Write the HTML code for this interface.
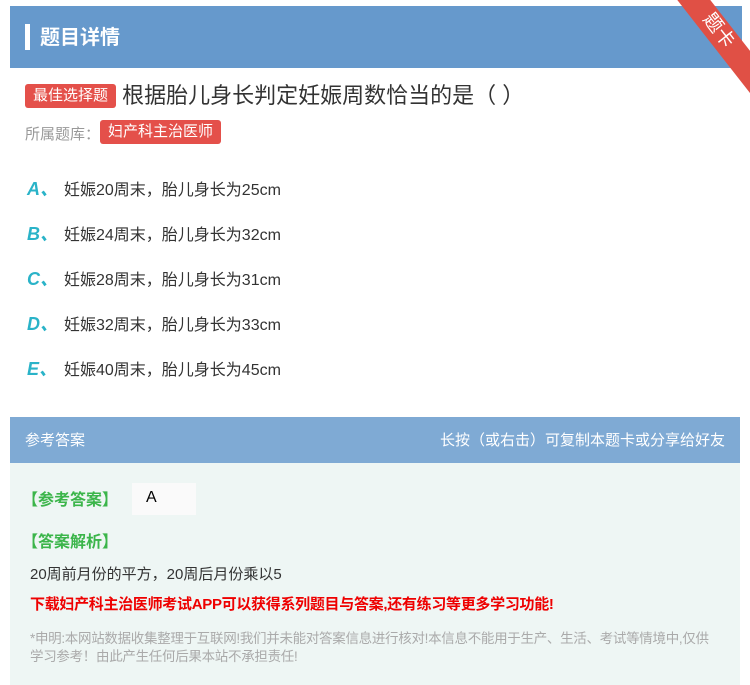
<!DOCTYPE html>
<html><head><meta charset="utf-8"><style>
*{margin:0;padding:0;box-sizing:border-box}
body{width:750px;height:685px;background:#fff;font-family:"Liberation Sans","Noto Sans CJK SC",sans-serif;position:relative;overflow:hidden}
.hd{position:absolute;left:10px;top:6px;width:732px;height:62px;background:#6699cc}
.hd .bar{position:absolute;left:15px;top:18px;width:5px;height:26px;background:#fff}
.hd .t{position:absolute;left:30px;top:15px;color:#fff;font-size:20px;font-weight:bold}
.rib{position:absolute;right:-38px;top:18px;width:140px;height:26px;background:#e05045;transform:rotate(52deg);color:#fff;text-align:center;font-size:19px;line-height:26px}
.q{position:absolute;left:25px;top:78px;font-size:22px;color:#333;white-space:nowrap}
.tag{display:inline-block;background:#e4504a;color:#fff;font-size:15px;border-radius:3px;padding:0 8px;height:24px;line-height:24px;vertical-align:3px}
.lib{position:absolute;left:25px;top:120px;font-size:15px;color:#999}
.opt{position:absolute;left:27px;font-size:16px;color:#333}
.opt b{color:#2ab3c8;font-style:italic;font-size:18px;display:inline-block;width:37px}
.ah{position:absolute;left:10px;top:417px;width:730px;height:46px;background:#7faad4;color:#fff;font-size:15px}
.ab{position:absolute;left:10px;top:463px;width:730px;height:222px;background:#eef6f4}
.g{color:#3bb54a;font-size:16px;font-weight:bold;position:absolute;left:12px}
</style></head><body>
<div class="hd"><div class="bar"></div><div class="t">题目详情</div></div>
<div class="rib">题卡</div>
<div class="q"><span class="tag">最佳选择题</span> 根据胎儿身长判定妊娠周数恰当的是（ ）</div>
<div class="lib">所属题库：<span class="tag" style="font-size:15px">妇产科主治医师</span></div>
<div class="opt" style="top:175px"><b>A、</b>妊娠20周末，胎儿身长为25cm</div>
<div class="opt" style="top:220px"><b>B、</b>妊娠24周末，胎儿身长为32cm</div>
<div class="opt" style="top:265px"><b>C、</b>妊娠28周末，胎儿身长为31cm</div>
<div class="opt" style="top:310px"><b>D、</b>妊娠32周末，胎儿身长为33cm</div>
<div class="opt" style="top:355px"><b>E、</b>妊娠40周末，胎儿身长为45cm</div>
<div class="ah"><span style="position:absolute;left:15px;top:12px">参考答案</span><span style="position:absolute;right:15px;top:12px">长按（或右击）可复制本题卡或分享给好友</span></div>
<div class="ab">
<div class="g" style="top:23px">【参考答案】</div>
<div style="position:absolute;left:122px;top:20px;width:64px;height:32px;background:#fafafa;font-size:16px;padding:6px 0 0 14px">A</div>
<div class="g" style="top:65px">【答案解析】</div>
<div style="position:absolute;left:20px;top:100px;font-size:15px;color:#333">20周前月份的平方，20周后月份乘以5</div>
<div style="position:absolute;left:20px;top:130px;font-size:15px;color:#e00;font-weight:bold;letter-spacing:-0.3px">下载妇产科主治医师考试APP可以获得系列题目与答案,还有练习等更多学习功能!</div>
<div style="position:absolute;left:20px;top:167px;width:690px;font-size:13.5px;color:#aaa;line-height:18px;letter-spacing:-0.3px">*申明:本网站数据收集整理于互联网!我们并未能对答案信息进行核对!本信息不能用于生产、生活、考试等情境中,仅供学习参考！由此产生任何后果本站不承担责任!</div>
</div>
</body></html>
